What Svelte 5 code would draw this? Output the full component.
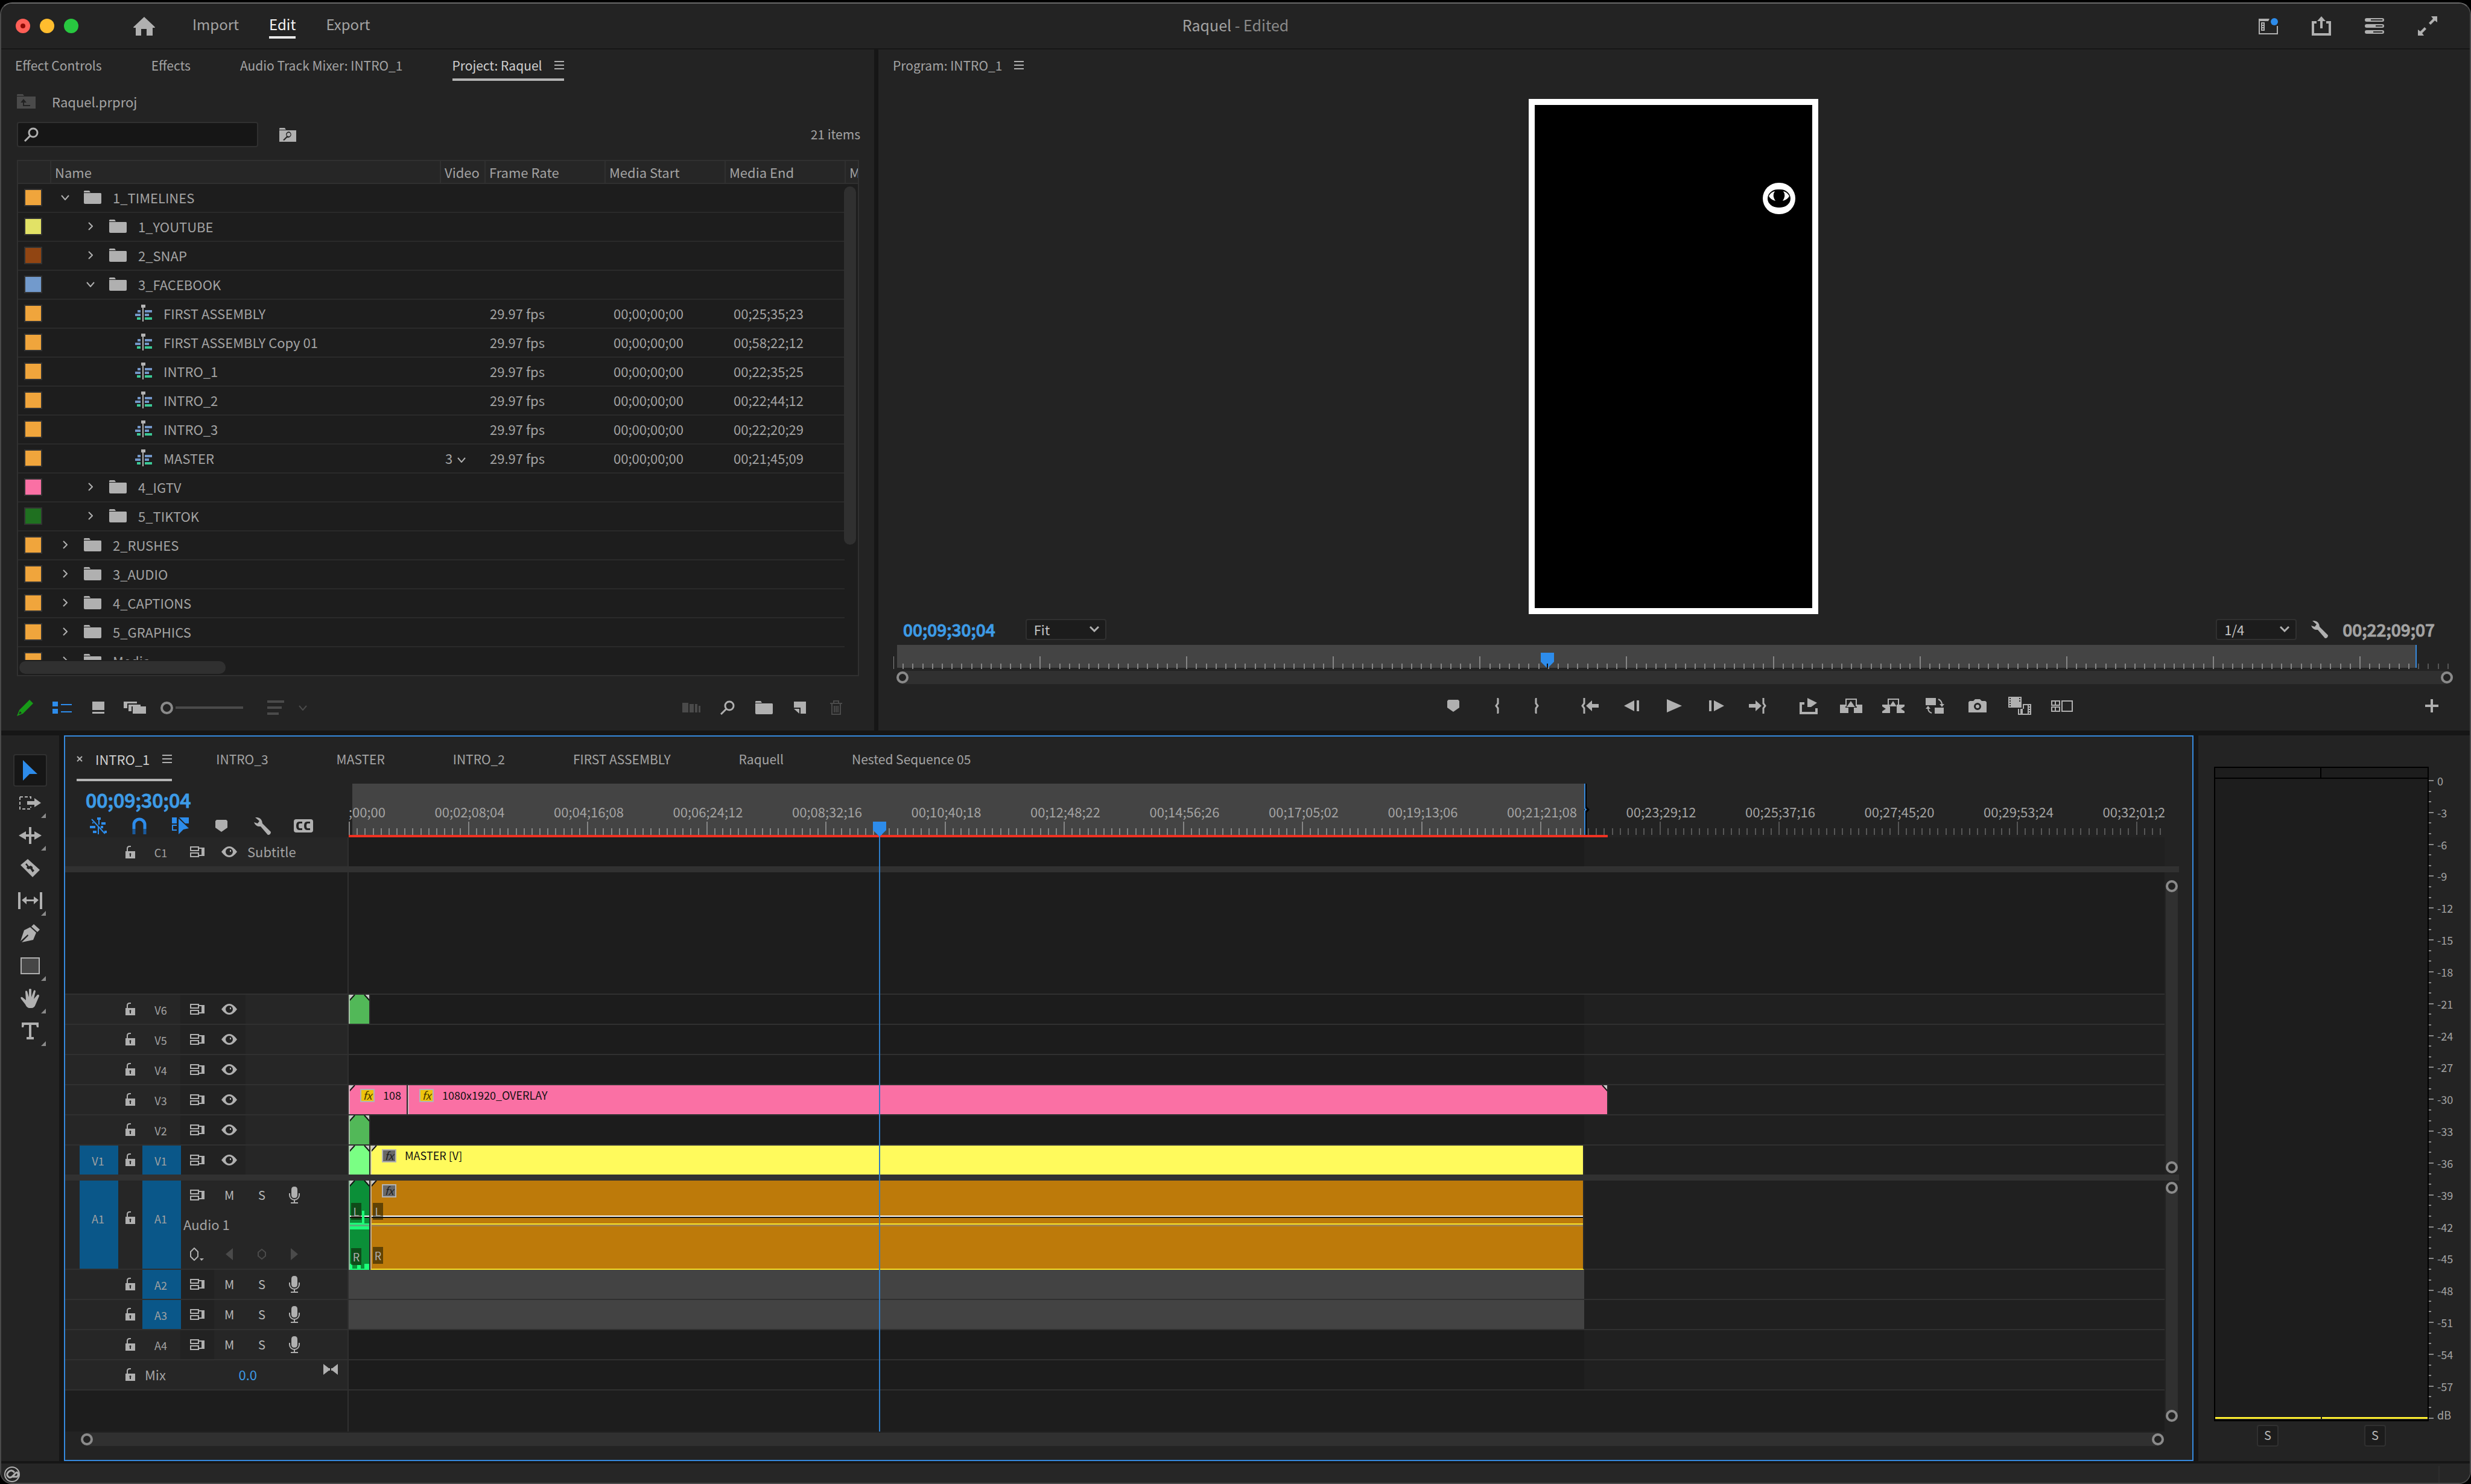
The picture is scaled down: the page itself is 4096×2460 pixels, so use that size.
<script>
  const SPAN = 3010;
  const pct = (v) => `${(v / SPAN) * 100}%`;

  const icons = {
    home: { w: 36, h: 31, d: 'M18 0L36 17Q36 18 35 18H32V31H22V20H13V31H4V18H1Q0 18 0 17z' },
    menu: { w: 16, h: 14, d: 'M0 0H16V2H0zM0 6H16V8H0zM0 12H16V14H0z' },
    workspace: {
      w: 32, h: 28,
      d: 'M0 2H18L16 6H2V26H30V14H32V28H0zM4 8H10V22H4zM6 10V12H8V10zM6 14V16H8V14zM6 18V20H8V18z',
      dot: [26, 7, 6]
    },
    share: { w: 32, h: 32, d: 'M0 8H8V12H4V28H28V12H24V8H32V32H0zM16 0L23 8H18V20H14V8H9z' },
    stack: {
      w: 32, h: 26,
      d: 'M3 0H29Q32 0 32 3T29 6H3Q0 6 0 3T3 0zM10 2V4H29Q30 3 29 2zM3 10H29Q32 10 32 13T29 16H3Q0 16 0 13T3 10zM18 12V14H29Q30 13 29 12zM3 20H29Q32 20 32 23T29 26H3Q0 26 0 23T3 20zM14 22V24H29Q30 23 29 22z'
    },
    expand: { w: 32, h: 32, d: 'M22 0H32V10L28 7 21 14 18 11 25 4zM0 22L4 25 11 18 14 21 7 28 10 32H0z' },
    folder: { w: 29, h: 22, d: 'M1 0H9L11 3H0V1zM0 4H28L29 5V20Q29 22 27 22H2Q0 22 0 20z' },
    folderUp: { w: 31, h: 24, d: 'M1 0H10L12 3H0V1zM0 4H31V24H0zM11 8L6 14H10V20H22V18H12V14H16z' },
    folderFind: { w: 28, h: 23, d: 'M1 0H9L11 3H0V1zM0 4H28V23H0zM16 6A5 5 0 0 0 12 14L6 20 8 21 13 16A5 5 0 1 0 16 6zM16 8A3 3 0 1 1 15 14A3 3 0 1 1 16 8z' },
    search: { w: 24, h: 24, s: 'M15 2A7 7 0 1 1 15 16A7 7 0 1 1 15 2zM10 14L1 23', sw: 3 },
    right: { w: 8, h: 14, s: 'M1 1L7 7 1 13', sw: 2 },
    down: { w: 14, h: 9, s: 'M1 1L7 8 13 1', sw: 2 },
    downBig: { w: 16, h: 10, s: 'M1 1L8 8 15 1', sw: 3 },
    pencil: { w: 27, h: 27, d: 'M21 0L27 6 10 23 0 27 4 17zM5 19L3 24 8 22z' },
    list: { w: 32, h: 20, d: 'M0 0H9V8H0zM14 4H32V6H14zM0 12H9V20H0zM14 16H32V18H14z' },
    thumb: { w: 20, h: 20, d: 'M0 0H20V14H0zM0 17H20V20H0z' },
    free: { w: 37, h: 20, d: 'M0 0H22V3H6V11H0zM8 5H28V8H13V16H8zM15 8H37V20H15z' },
    sort: { w: 28, h: 24, d: 'M0 0H28V4H0zM0 10H24V14H0zM0 20H19V24H0z' },
    library: { w: 30, h: 16, d: 'M0 0H10V16H0zM12 2H19V16H12zM21 2H25V16H21zM27 5H30V16H27z' },
    newItem: { w: 20, h: 20, d: 'M0 0H20V20H11V10H0zM0 12H9V20z' },
    trash: { w: 22, h: 24, s: 'M1 5H21M7 4V1H15V4M4 6V23H18V6M8 9V20M11 9V20M14 9V20', sw: 2 },
    marker: { w: 20, h: 20, d: 'M2 0H18L20 2V13L10 20 0 13V2z' },
    braceL: { w: 8, h: 26, s: 'M7 1H6V9L3 13 6 17V25H7', sw: 3 },
    braceR: { w: 8, h: 26, s: 'M1 1H2V9L5 13 2 17V25H1', sw: 3 },
    goIn: { w: 30, h: 26, s: 'M6 0V9L3 13 6 17V26', sw: 3, d: 'M9 13L19 4V10H30V16H19V22z' },
    goOut: { w: 30, h: 26, s: 'M24 0V9L27 13 24 17V26', sw: 3, d: 'M21 13L11 4V10H0V16H11V22z' },
    stepBack: { w: 26, h: 18, d: 'M0 9L17 0V18zM21 0H25V18H21z' },
    play: { w: 26, h: 22, d: 'M1 0L26 11 1 22z' },
    stepForward: { w: 26, h: 18, d: 'M1 0H5V18H1zM9 0L26 9 9 18z' },
    insert: { w: 30, h: 27, s: 'M8 9H2V25H28V17', sw: 4, d: 'M13 0L29 8 19 15H13z' },
    lift: { w: 37, h: 24, s: 'M10 13V1H27V13', sw: 2, d: 'M0 10H9V15H14V24H0zM37 10H28V15H23V24H37zM18 4L25 14H11z' },
    extract: { w: 37, h: 24, s: 'M10 11V1H27V11', sw: 2, d: 'M0 10H13V24H0V21L6 17 0 13zM37 10H24V24H37V21L31 17 37 13zM18 4L24 13H12z' },
    compare: { w: 34, h: 26, s: 'M22 2Q28 5 28 11M11 25Q5 23 5 17', sw: 2, d: 'M1 0H18V12H1zM16 16H31V26H16zM24 10H32L28 15zM1 18H9L5 13z' },
    camera: { w: 30, h: 22, d: 'M8 3L11 0H19L22 3H28L30 5V22H0V5L2 3zM15 6A6 6 0 1 0 15 18A6 6 0 1 0 15 6zM15 9A3 3 0 1 1 15 15A3 3 0 1 1 15 9z' },
    film: { w: 38, h: 30, d: 'M0 0H22V18H0zM2 2V4H4V2zM2 6V8H4V6zM2 10V12H4V10zM2 14V16H4V14zM18 2V4H20V2zM18 6V8H20V6zM24 12H38V30H16V20H18V28H20V20H24zM24 20V28H32V14H26V20zM34 14V16H36V14zM34 18V20H36V18zM34 22V24H36V22zM34 26V28H36V26z' },
    multi: { w: 36, h: 19, s: 'M1 1H14V8H1zM7 1V8M1 11H14V18H1zM7 11V18M18 1H35V18H18z', sw: 2 },
    plus: { w: 22, h: 22, d: 'M9 0H13V9H22V13H13V22H9V13H0V9H9z' },
    wrench: { w: 28, h: 29, d: 'M2 0Q13 -1 14 10L28 24Q28 29 23 29L11 15Q3 16 0 8L6 10 9 6z' },
    nest: { w: 28, h: 28, s: 'M3 3L25 27', sw: 2, d: 'M12 0H18V4H16V12H14V4H12zM19 8H26V12H19zM0 14H9V18H0zM13 15V28H15V16zM18 14H22V18H18zM5 22H11V26H5zM24 22H28V26H24zM4 8H6V10H4z' },
    magnet: { w: 24, h: 28, s: 'M3 19V12A9 9 0 0 1 21 12V19', sw: 5, s2: 'M3 19V28M21 19V28' },
    linked: { w: 28, h: 28, d: 'M0 0H8V10H0zM12 0H28V10H22L13 1zM0 12H8V14H2V20H8V22H0zM11 2L28 18 19 20 11 28z' },
    cc: { w: 32, h: 22, d: 'M4 0H28Q32 0 32 4V18Q32 22 28 22H4Q0 22 0 18V4Q0 0 4 0zM14 7V4H9Q4 4 4 11T9 18H14V15H10Q8 15 8 11T10 7zM27 7V4H22Q17 4 17 11T22 18H27V15H23Q21 15 21 11T23 7z' },
    lock: { w: 16, h: 21, s: 'M3 10V5Q3 1 7 1H9', sw: 2, d: 'M0 9H16V21H0zM8 12A2 2 0 0 0 7 15V18H9V15A2 2 0 0 0 8 12z' },
    sync: { w: 24, h: 18, s: 'M1 1H14V7H1zM1 11H14V17H1zM14 3H21V15H14', sw: 2, d: 'M19 2H24V16H19z' },
    eye: { w: 26, h: 18, d: 'M0 9Q13 -9 26 9Q13 27 0 9zM13 3A6 6 0 1 0 13 15A6 6 0 1 0 13 3zM14 6H16V9H14z' },
    mic: { w: 18, h: 28, s: 'M1 11V14A8 8 0 0 0 17 14V11M9 22V27M3 27H15', sw: 2, d: 'M9 0Q14 0 14 5V14Q14 19 9 19T4 14V5Q4 0 9 0z' },
    keyframe: { w: 24, h: 22, s: 'M7 1L13 7V15L7 21 1 15V7z', sw: 2, d: 'M16 18H23L19 22z' },
    diamond: { w: 14, h: 18, s: 'M7 1L13 6V12L7 17 1 12V6z', sw: 2 },
    prev: { w: 12, h: 20, d: 'M0 10L12 0V20z' },
    next: { w: 12, h: 20, d: 'M0 0L12 10 0 20z' },
    bowtie: { w: 24, h: 18, d: 'M0 0L9 7H11V11H9L0 18zM24 0L15 7H13V11H15L24 18z' },
    close: { w: 10, h: 10, s: 'M1 1L9 9M9 1L1 9', sw: 2 },
    select: { w: 24, h: 34, d: 'M0 0L24 23H11L0 34z' },
    trackSelect: { w: 36, h: 22, s: 'M1 1H19V5M1 1V21H19V17', sw: 2, dash: '5 3', d: 'M13 8H25V3L36 11 25 18V14H13z' },
    ripple: { w: 38, h: 28, d: 'M0 14L12 7V12H17V0H21V12H26V7L38 14 26 21V16H21V28H17V16H12V21z' },
    razor: { w: 32, h: 30, d: 'M12 0L32 18 20 30 0 10zM10 7L8 9 11 12 10 15 13 17 16 16 20 22 23 19 20 16 20 13 17 11 14 12z' },
    slip: { w: 40, h: 28, d: 'M0 0H4V28H0zM36 0H40V28H36zM6 13L14 7V12H26V7L34 13 26 20V15H14V20z' },
    pen: { w: 32, h: 30, d: 'M22 0L32 9 28 13 18 4zM16 5L26 14 21 26 2 30 13 19 12 17 0 28 6 10z' },
    rect: { w: 32, h: 28, s: 'M1 1H31V27H1z', sw: 2, fill: '#464646' },
    hand: { w: 32, h: 32, d: 'M8 5Q8 2 11 4L14 14 14 1Q16 -1 18 1V14L22 3Q24 1 25 4L22 17 28 10Q31 9 31 12L25 26Q23 32 18 32H14Q10 31 8 26L1 17Q-1 13 3 14L9 19z' },
    type: { w: 28, h: 28, d: 'M0 0H28V8H25L24 4H16V24H20V28H8V24H12V4H4L3 8H0z' }
  };

  const topIcons = ['workspace', 'share', 'stack', 'expand'];
  const ORANGE = '#f0a53c';

  const rows = [
    { color: ORANGE, name: '1_TIMELINES', level: 0, open: true },
    { color: '#e2e266', name: '1_YOUTUBE', level: 1 },
    { color: '#914512', name: '2_SNAP', level: 1 },
    { color: '#729acc', name: '3_FACEBOOK', level: 1, open: true },
    { color: ORANGE, name: 'FIRST ASSEMBLY', level: 2, end: '00;25;35;23' },
    { color: ORANGE, name: 'FIRST ASSEMBLY Copy 01', level: 2, end: '00;58;22;12' },
    { color: ORANGE, name: 'INTRO_1', level: 2, end: '00;22;35;25' },
    { color: ORANGE, name: 'INTRO_2', level: 2, end: '00;22;44;12' },
    { color: ORANGE, name: 'INTRO_3', level: 2, end: '00;22;20;29' },
    { color: ORANGE, name: 'MASTER', level: 2, end: '00;21;45;09', usage: 3 },
    { color: '#fa70a4', name: '4_IGTV', level: 1 },
    { color: '#1f7020', name: '5_TIKTOK', level: 1 },
    { color: ORANGE, name: '2_RUSHES', level: 0 },
    { color: ORANGE, name: '3_AUDIO', level: 0 },
    { color: ORANGE, name: '4_CAPTIONS', level: 0 },
    { color: ORANGE, name: '5_GRAPHICS', level: 0 },
    { color: ORANGE, name: 'Media', level: 0 }
  ];

  const tools = [
    { icon: 'select', label: 'Selection' },
    { icon: 'trackSelect', label: 'Track select', more: true },
    { icon: 'ripple', label: 'Ripple edit', more: true },
    { icon: 'razor', label: 'Razor' },
    { icon: 'slip', label: 'Slip', more: true },
    { icon: 'pen', label: 'Pen' },
    { icon: 'rect', label: 'Rectangle', more: true },
    { icon: 'hand', label: 'Hand', more: true },
    { icon: 'type', label: 'Type', more: true }
  ];

  const sequences = ['INTRO_3', 'MASTER', 'INTRO_2', 'FIRST ASSEMBLY', 'Raquell', 'Nested Sequence 05'];

  const times = [
    '00;00;00;00', '00;02;08;04', '00;04;16;08', '00;06;24;12', '00;08;32;16', '00;10;40;18',
    '00;12;48;22', '00;14;56;26', '00;17;05;02', '00;19;13;06', '00;21;21;08', '00;23;29;12',
    '00;25;37;16', '00;27;45;20', '00;29;53;24', '00;32;01;28'
  ];
  const MAJOR = 197.5;
  const OUT = 2048;
  const ticks = Array.from({ length: 229 }, (_, i) => ({ x: 1 + (i * MAJOR) / 15, major: i % 15 === 0 }));
  const scrubTicks = Array.from({ length: 160 }, (_, i) => ({ x: (i * 16.2) / 25.8, major: i % 15 === 0 }));

  const videoTracks = [
    { name: 'V6', clips: [{ from: 0, to: 36, color: '#52b858', fades: 'lr' }] },
    { name: 'V5', clips: [] },
    { name: 'V4', clips: [] },
    {
      name: 'V3',
      clips: [
        { from: 0, to: 98, color: '#fa70a4', fades: 'l', fx: 'on', text: '108' },
        { from: 98, to: 2088, color: '#fa70a4', fades: 'r', fx: 'on', text: '1080x1920_OVERLAY' }
      ]
    },
    { name: 'V2', clips: [{ from: 0, to: 36, color: '#52b858', fades: 'lr' }] },
    {
      name: 'V1',
      source: true,
      clips: [
        { from: 0, to: 36, color: '#7aff84', fades: 'lr' },
        { from: 36, to: 2048, color: '#fffa5c', fades: 'l', fx: 'off', text: 'MASTER [V]' }
      ]
    }
  ];

  const audioTracks = [
    { name: 'A2', target: true },
    { name: 'A3', target: true },
    { name: 'A4' }
  ];

  // one label every 3 dB
  const levels = Array.from({ length: 61 }, (_, i) => ({
    major: i % 3 === 0,
    text: i === 60 ? 'dB' : i === 0 ? '0' : `-${i}`
  }));

  let search = $state('');
  let zoom = $state(0);
  let fit = $state('Fit');
  let quality = $state('1/4');
</script>

{#snippet icon(name)}
  {@const i = icons[name]}
  <svg class="icon" width={i.w} height={i.h} viewBox="0 0 {i.w} {i.h}" aria-hidden="true">
    {#if i.d}<path d={i.d} fill="currentColor" fill-rule="evenodd" />{/if}
    {#if i.s}
      <path d={i.s} fill={i.fill ?? 'none'} stroke="currentColor" stroke-width={i.sw} stroke-dasharray={i.dash} />
    {/if}
    {#if i.s2}<path d={i.s2} fill="none" stroke="#1a5a9c" stroke-width={i.sw} />{/if}
    {#if i.dot}<circle cx={i.dot[0]} cy={i.dot[1]} r={i.dot[2]} fill="#2d8ceb" />{/if}
  </svg>
{/snippet}

{#snippet button(name, label, extra = '')}
  <button class="tool {extra}" aria-label={label}>{@render icon(name)}</button>
{/snippet}

{#snippet sequenceIcon()}
  <svg class="icon" width="28" height="28" viewBox="0 0 28 28" aria-hidden="true">
    <path d="M10 0H17V5H14V28H12V5H10z" fill="#b4b4b4" />
    <path d="M4 9H9V13H4zM16 9H28V13H16zM0 15H9V19H0zM16 15H23V19H16z" fill="#7396c8" />
    <path d="M3 21H9V25H3zM16 21H28V25H16z" fill="#3cc896" />
  </svg>
{/snippet}

{#snippet clipView(c)}
  <div class="clip" style="left: {pct(c.from)}; width: {pct(c.to - c.from)}; background: {c.color}">
    {#if c.fades.includes('l')}{@render corner('left')}{/if}
    {#if c.fades.includes('r')}{@render corner('right')}{/if}
    {#if c.fx}<span class="fx {c.fx}">fx</span>{/if}
    {#if c.text}<span class="clip-name">{c.text}</span>{/if}
  </div>
{/snippet}

{#snippet corner(side)}
  <svg class="corner {side}" width="11" height="11" viewBox="0 0 11 11" aria-hidden="true">
    <path d={side === 'left' ? 'M0 0H9L0 10z' : 'M11 0H2L11 10z'} fill="#c8c8c8" />
    <path d={side === 'left' ? 'M10 0L0 11' : 'M1 0L11 11'} stroke="#111" stroke-width="2" />
  </svg>
{/snippet}

<div class="window">
  <header class="titlebar">
    <div class="lights"><i class="red"></i><i class="yellow"></i><i class="green"></i></div>
    {@render button('home', 'Home', 'home')}
    <nav class="modes">
      <a href="#import">Import</a>
      <a href="#edit" class="active">Edit</a>
      <a href="#export">Export</a>
    </nav>
    <h1>Raquel <span>- Edited</span></h1>
    <div class="top-icons">
      {#each topIcons as name}{@render button(name, name)}{/each}
    </div>
  </header>

  <main>
    <div class="upper">
      <section class="panel project">
        <div class="tabs">
          <button class="tab">Effect Controls</button>
          <button class="tab">Effects</button>
          <button class="tab">Audio Track Mixer: INTRO_1</button>
          <button class="tab active">Project: Raquel {@render icon('menu')}</button>
        </div>
        <div class="path"><span class="dim">{@render icon('folderUp')}</span>Raquel.prproj</div>
        <div class="finder">
          <label class="search">
            {@render icon('search')}
            <input type="text" aria-label="Search" bind:value={search} />
          </label>
          {@render button('folderFind', 'Find in bin')}
          <span class="count">21 items</span>
        </div>

        <div class="bin">
          <div class="bin-view">
            <table>
              <colgroup>
                <col class="c-label" /><col class="c-name" /><col class="c-video" /><col class="c-time" />
                <col class="c-time" /><col class="c-time" /><col class="c-last" />
              </colgroup>
              <thead>
                <tr>
                  <th aria-label="Label"></th><th>Name</th><th>Video</th><th>Frame Rate</th>
                  <th>Media Start</th><th>Media End</th><th>M</th>
                </tr>
              </thead>
              <tbody>
                {#each rows as row}
                  <tr>
                    <td><i class="swatch" style="background: {row.color}"></i></td>
                    <td>
                      <div class="name level-{row.level}">
                        {#if row.level < 2}
                          <span class="twist">{@render icon(row.open ? 'down' : 'right')}</span>
                          {@render icon('folder')}
                        {:else}
                          {@render sequenceIcon()}
                        {/if}
                        <span>{row.name}</span>
                      </div>
                    </td>
                    <td>{#if row.usage}<span class="usage">{row.usage} {@render icon('down')}</span>{/if}</td>
                    <td>{row.end ? '29.97 fps' : ''}</td>
                    <td class="start">{row.end ? '00;00;00;00' : ''}</td>
                    <td class="start">{row.end ?? ''}</td>
                    <td class="last"></td>
                  </tr>
                {/each}
              </tbody>
            </table>
            <i class="scroll-y"></i>
          </div>
          <i class="scroll-x"></i>
        </div>

        <div class="bin-tools">
          {@render button('pencil', 'Writable', 'pencil')}
          {@render button('list', 'List view', 'blue list')}
          {@render button('thumb', 'Icon view', 'thumb')}
          {@render button('free', 'Freeform view', 'free')}
          <input class="zoom" type="range" aria-label="Zoom" bind:value={zoom} />
          {@render button('sort', 'Sort icons', 'dim')}
          {@render button('down', 'Sort menu', 'dim sort-menu')}
          <div class="bin-actions">
            {@render button('library', 'Automate to sequence', 'dim')}
            {@render button('search', 'Find')}
            {@render button('folder', 'New bin')}
            {@render button('newItem', 'New item')}
            {@render button('trash', 'Clear', 'dim')}
          </div>
        </div>
      </section>

      <section class="panel program">
        <div class="tabs">
          <button class="tab">Program: INTRO_1 {@render icon('menu')}</button>
        </div>
        <div class="stage">
          <div class="frame">
            <svg class="logo" width="54" height="52" viewBox="0 0 54 52" aria-hidden="true">
              <rect width="54" height="52" rx="26" fill="#fff" />
              <rect x="8" y="11" width="38" height="30" rx="17" ry="15" />
              <path d="M20 14Q15 21 21 30Q13 28 10 22Q14 15 20 14zM34 14Q39 21 33 30Q41 28 44 22Q40 15 34 14z" fill="#fff" />
            </svg>
          </div>
        </div>
        <div class="monitor-bar">
          <span class="timecode blue">00;09;30;04</span>
          <label class="picker">
            <select aria-label="Zoom level" bind:value={fit}><option>Fit</option></select>
            {@render icon('downBig')}
          </label>
          <span class="grow"></span>
          <label class="picker">
            <select aria-label="Playback resolution" bind:value={quality}><option>1/4</option></select>
            {@render icon('downBig')}
          </label>
          {@render button('wrench', 'Settings', 'settings')}
          <span class="timecode">00;22;09;07</span>
        </div>
        <div class="scrub">
          <i class="range"></i>
          <svg class="ticks" width="100%" height="40" shape-rendering="crispEdges" aria-hidden="true">
            {#each scrubTicks as t}
              <line x1="{t.x}%" x2="{t.x}%" y1={t.major ? 19 : 31} y2="40" class:out={t.x > 97.8} />
            {/each}
          </svg>
          <svg class="head" width="22" height="25" viewBox="0 0 22 25" aria-hidden="true">
            <path d="M0 0H22V15L12 25H10L0 15z" fill="#2d8ceb" /><path d="M10 18H12V25H10z" fill="#111" />
          </svg>
        </div>
        <div class="bar-x"><i></i><i></i></div>
        <div class="transport">
          <div class="side before">
            {@render button('marker', 'Add marker', 'wide')}
            {@render button('braceL', 'Mark in')}
            {@render button('braceR', 'Mark out', 'apart')}
            {@render button('goIn', 'Go to in')}
            {@render button('stepBack', 'Step back')}
          </div>
          {@render button('play', 'Play')}
          <div class="side">
            {@render button('stepForward', 'Step forward')}
            {@render button('goOut', 'Go to out', 'after')}
            {@render button('insert', 'Export')}
            {@render button('lift', 'Lift')}
            {@render button('extract', 'Extract')}
            {@render button('compare', 'Comparison view')}
            {@render button('camera', 'Export frame')}
            {@render button('film', 'Toggle proxies')}
            {@render button('multi', 'Multi-camera')}
            <span class="grow"></span>
            {@render button('plus', 'Button editor')}
          </div>
        </div>
      </section>
    </div>

    <div class="lower">
      <aside class="panel toolbox">
        {#each tools as t, i}
          <button class="tool-button" class:active={i === 0} aria-label={t.label}>
            {@render icon(t.icon)}
            {#if t.more}<i></i>{/if}
          </button>
        {/each}
      </aside>

      <section class="panel timeline">
        <div class="seq-tabs">
          <button class="seq active">{@render icon('close')}<span>INTRO_1</span>{@render icon('menu')}</button>
          {#each sequences as name}<button class="seq">{name}</button>{/each}
        </div>

        <div class="board">
          <div class="ruler-row">
            <div class="controls">
              <span class="timecode big blue">00;09;30;04</span>
              <div class="toggles">
                {@render button('nest', 'Insert as nest', 'blue')}
                {@render button('magnet', 'Snap', 'blue')}
                {@render button('linked', 'Linked selection', 'blue')}
                {@render button('marker', 'Add marker')}
                {@render button('wrench', 'Timeline settings')}
                {@render button('cc', 'Captions')}
              </div>
            </div>
            <div class="ruler">
              <i class="range" style="width: calc({pct(OUT)} - 6px)"></i>
              {#each times as time, i}
                <span class="time" style="left: {pct(i * MAJOR + 3)}">{time}</span>
              {/each}
              <svg class="ticks" width="100%" height="22" shape-rendering="crispEdges" aria-hidden="true">
                {#each ticks as t}
                  <line x1={pct(t.x)} x2={pct(t.x)} y1={t.major ? 0 : 11} y2="22" class:out={t.x > OUT} />
                {/each}
              </svg>
              <svg class="out-mark" style="left: {pct(OUT)}" width="10" height="86" viewBox="0 0 10 86" aria-hidden="true">
                <path d="M2 0H4V38L9 43 4 48V86H2z" fill="#000" />
                <path d="M1 0V41L3 43 1 45V86" fill="none" stroke="#3689dd" stroke-width="2" />
              </svg>
              <i class="render" style="width: {pct(2087)}"></i>
            </div>
          </div>

          <div class="track caption">
            <div class="head-cell">
              <span></span>
              {@render icon('lock')}
              <span class="patch off">C1</span>
              {@render icon('sync')}
              {@render icon('eye')}
              <span class="label">Subtitle</span>
            </div>
            <div class="lane"><i class="in" style="width: {pct(OUT)}"></i></div>
          </div>
          <div class="divider"></div>

          <div class="area video">
            <div class="tracks">
              <div class="void"></div>
              {#each videoTracks as track}
                <div class="track">
                  <div class="head-cell shaded">
                    {#if track.source}<span class="patch">V1</span>{:else}<span></span>{/if}
                    {@render icon('lock')}
                    <span class="patch" class:off={!track.source}>{track.name}</span>
                    {@render icon('sync')}
                    {@render icon('eye')}
                  </div>
                  <div class="lane">
                    <i class="in" style="width: {pct(OUT)}"></i>
                    {#each track.clips as c}{@render clipView(c)}{/each}
                  </div>
                </div>
              {/each}
            </div>
            <div class="bar-y first"><i></i><i></i></div>
          </div>
          <div class="divider"></div>

          <div class="area audio">
            <div class="tracks">
              <div class="track tall">
                <div class="head-cell">
                  <span class="patch">A1</span>
                  {@render icon('lock')}
                  <span class="patch">A1</span>
                  <div class="audio-head">
                    <div class="audio-row">
                      {@render icon('sync')}<b>M</b><b>S</b>{@render icon('mic')}
                    </div>
                    <span class="label">Audio 1</span>
                    <div class="audio-row">
                      {@render icon('keyframe')}
                      <span class="dim">{@render icon('prev')}</span>
                      <span class="dim">{@render icon('diamond')}</span>
                      <span class="dim">{@render icon('next')}</span>
                    </div>
                  </div>
                </div>
                <div class="lane">
                  <i class="in" style="width: {pct(OUT)}"></i>
                  <div class="clip sound green" style="left: 0; width: {pct(36)}">
                    {@render corner('left')}{@render corner('right')}
                    <svg class="wave" width="34" height="148" viewBox="0 0 34 148" aria-hidden="true">
                      <path d="M20 50H24V72H34V81H0V70H20zM0 138H4V146H12V140H18V146H24V138H32V148H0z" fill="#1cff78" />
                    </svg>
                    <em class="left-channel">L</em><em class="right-channel">R</em>
                  </div>
                  <div class="clip sound orange" style="left: {pct(36)}; width: {pct(2012)}">
                    {@render corner('left')}
                    <span class="fx off">fx</span>
                    <em class="left-channel">L</em><em class="right-channel">R</em>
                  </div>
                </div>
              </div>
              {#each audioTracks as track}
                <div class="track">
                  <div class="head-cell audio-cell">
                    <span></span>
                    {@render icon('lock')}
                    <span class="patch" class:off={!track.target}>{track.name}</span>
                    {@render icon('sync')}<b>M</b><b>S</b>{@render icon('mic')}
                  </div>
                  <div class="lane">
                    <i class="in" class:filled={track.target} style="width: {pct(OUT)}"></i>
                  </div>
                </div>
              {/each}
              <div class="track">
                <div class="head-cell mix">
                  <span></span>
                  {@render icon('lock')}
                  <span class="label">Mix</span>
                  <span class="label blue">0.0</span>
                  {@render icon('bowtie')}
                </div>
                <div class="lane"><i class="in" style="width: {pct(OUT)}"></i></div>
              </div>
              <div class="void end"></div>
            </div>
            <div class="bar-y"><i></i><i></i></div>
          </div>

          <div class="playhead-layer">
            <div class="playhead" style="left: {pct(880)}">
              <svg width="22" height="24" viewBox="0 0 22 24" aria-hidden="true">
                <path d="M0 0H22V14L12 24H10L0 14z" fill="#2d8ceb" />
              </svg>
            </div>
          </div>
        </div>
        <div class="bar-x"><i></i><i></i></div>
      </section>

      <section class="panel meters">
        <div class="meter-main">
          <div class="meter-box">
            <div class="clip-lights"><i></i><i></i></div>
            <div class="floor"><i></i><i></i></div>
          </div>
          <div class="solos"><button>S</button><button>S</button></div>
        </div>
        <div class="scale">
          {#each levels as l}
            <div class="level" class:major={l.major}>{#if l.major}<span>{l.text}</span>{/if}</div>
          {/each}
        </div>
      </section>
    </div>
  </main>

  <footer>
    <svg width="30" height="26" viewBox="0 0 30 26" aria-hidden="true">
      <path d="M13 1A12 12 0 1 1 13 25A12 12 0 1 1 13 1z" fill="none" stroke="#b0b0b0" stroke-width="2" />
      <path d="M17 10Q12 4 7 9T8 18Q12 19 16 14T22 10Q25 14 21 17H14" fill="none" stroke="#b0b0b0" stroke-width="3" />
    </svg>
    <i></i>
  </footer>
</div>

<style>
  :global(body) {
    background: #0a0206;
  }

  :global(#app) {
    box-sizing: border-box;
    height: 100vh;
    padding-top: 4px;
    overflow: hidden;
    background: linear-gradient(90deg, #2a0818, #1a0410);
  }

  .window {
    --line: #303030;
    --grey: #b0b0b0;
    --blue: #3d9be6;
    display: flex;
    flex-direction: column;
    height: 100%;
    overflow: hidden;
    border: 2px solid #4a4a4a;
    border-top-color: #6a6a6a;
    border-radius: 20px;
    background: #161616;
    color: #a3a3a3;
    font-family: 'Noto Sans CJK SC', 'Noto Sans', sans-serif;
    font-size: 22px;
    line-height: 28px;
    box-shadow: 0 0 0 20px #000;
  }

  .window *,
  .window {
    box-sizing: border-box;
  }

  button {
    display: flex;
    align-items: center;
    justify-content: center;
    padding: 0;
    border: none;
    background: none;
    color: inherit;
    font: inherit;
  }

  i,
  em {
    font-style: normal;
  }

  .icon {
    display: block;
    flex: none;
    color: var(--grey);
  }

  .dim .icon {
    color: #4a4a4a;
  }

  .blue .icon {
    color: #2d8ceb;
  }

  .pencil .icon {
    color: #179a17;
  }

  .blue {
    color: var(--blue);
  }

  .grow {
    flex: 1;
  }

  /* title bar */
  .titlebar {
    position: relative;
    display: flex;
    align-items: center;
    flex: none;
    height: 74px;
    padding: 0 54px 0 24px;
    background: #232323;
  }

  .lights {
    display: flex;
    gap: 16px;
    width: 195px;
  }

  .lights i {
    width: 24px;
    height: 24px;
    border-radius: 50%;
    background: #ff5f57;
  }

  .lights .red {
    border: 8px solid #ff5f57;
    background: #8f0a04;
  }

  .lights .yellow {
    background: #ffbd2e;
  }

  .lights .green {
    background: #28c840;
  }

  .modes {
    display: flex;
    gap: 50px;
    margin-left: 62px;
    font-size: 24px;
  }

  .modes a {
    padding: 4px 0 6px;
    border-bottom: 4px solid transparent;
    color: inherit;
    text-decoration: none;
  }

  .modes .active {
    border-color: #e8e8e8;
    color: #f4f4f4;
  }

  h1 {
    position: absolute;
    inset: 0;
    margin: 0;
    font-size: 25px;
    font-weight: 400;
    line-height: 70px;
    text-align: center;
    pointer-events: none;
  }

  h1 span {
    color: #8a8a8a;
  }

  .top-icons {
    display: flex;
    gap: 56px;
    margin-left: auto;
  }

  main {
    display: flex;
    flex: 1;
    flex-direction: column;
    gap: 8px;
    min-height: 0;
    padding: 2px 0 4px;
  }

  .upper {
    display: grid;
    flex: 1129;
    grid-template-columns: 1447fr 2638fr;
    gap: 7px;
    min-height: 0;
  }

  .lower {
    display: grid;
    flex: 1203;
    grid-template-columns: 96px minmax(0, 1fr) 450px;
    gap: 8px;
    min-height: 0;
  }

  .panel {
    display: flex;
    flex-direction: column;
    min-width: 0;
    min-height: 0;
    background: #232323;
  }

  /* project */
  .project {
    padding: 0 25px 0 26px;
  }

  .tabs {
    display: flex;
    flex: none;
    gap: 82px;
    height: 52px;
    padding-top: 12px;
    margin-left: -3px;
    font-size: 21px;
  }

  .tab {
    gap: 20px;
    border-bottom: 4px solid transparent;
    padding-bottom: 8px;
    white-space: nowrap;
  }

  .tab.active {
    border-color: #b4b4b4;
    color: #cfcfcf;
  }

  .path {
    display: flex;
    align-items: center;
    gap: 27px;
    height: 68px;
  }

  .finder {
    display: flex;
    align-items: center;
    gap: 35px;
    height: 42px;
  }

  .search {
    display: flex;
    align-items: center;
    width: 400px;
    height: 42px;
    padding: 0 10px;
    border: 2px solid var(--line);
    border-radius: 4px;
    background: #161616;
  }

  .search input {
    flex: 1;
    min-width: 0;
    border: none;
    background: none;
    color: inherit;
    font: inherit;
    outline: none;
  }

  .count {
    margin-left: auto;
    margin-right: -2px;
    padding-bottom: 2px;
    font-size: 21px;
  }

  .bin {
    display: flex;
    flex: 1;
    flex-direction: column;
    min-height: 0;
    margin-top: 21px;
    border: 2px solid var(--line);
    background: #1d1d1d;
  }

  .bin-view {
    position: relative;
    flex: 1;
    min-height: 0;
    overflow: hidden;
  }

  table {
    width: 100%;
    border-collapse: separate;
    border-spacing: 0;
    table-layout: fixed;
  }

  .c-label {
    width: 53px;
  }

  .c-video {
    width: 74px;
  }

  .c-time {
    width: 199px;
  }

  .c-last {
    width: 22px;
  }

  th {
    height: 38px;
    padding: 0 0 0 6px;
    border-bottom: 2px solid var(--line);
    border-left: 2px solid var(--line);
    background: #262626;
    font-weight: 400;
    text-align: left;
    white-space: nowrap;
    overflow: hidden;
  }

  th:first-child {
    border-left: none;
  }

  td {
    height: 48px;
    padding: 0 0 2px 9px;
    border-bottom: 2px solid #2a2a2a;
    white-space: nowrap;
  }

  td:first-child {
    padding-left: 10px;
  }

  td.start {
    padding-left: 15px;
  }

  td.last {
    border: none;
  }

  .swatch {
    display: block;
    width: 30px;
    height: 29px;
    border: 2px solid #333;
    background-clip: padding-box;
  }

  .name {
    display: flex;
    align-items: center;
    gap: 19px;
    padding-left: 6px;
  }

  .twist {
    display: flex;
    justify-content: center;
    width: 20px;
    margin-right: 2px;
  }

  .name.level-1 {
    padding-left: 48px;
  }

  .name.level-2 {
    padding-left: 132px;
  }

  .usage {
    display: flex;
    align-items: center;
    gap: 8px;
  }

  .usage .icon {
    margin-top: 6px;
  }

  .scroll-y {
    position: absolute;
    top: 42px;
    right: 3px;
    width: 20px;
    height: 594px;
    border-radius: 10px;
    background: var(--line);
  }

  .scroll-x {
    flex: none;
    width: 342px;
    height: 21px;
    margin: 2px;
    border-radius: 10px;
    background: var(--line);
  }

  .bin-tools {
    display: flex;
    align-items: center;
    flex: none;
    height: 90px;
    padding-top: 14px;
  }

  .list {
    margin-left: 32px;
  }

  .thumb {
    margin-left: 34px;
  }

  .free {
    margin-left: 32px;
  }

  .zoom {
    width: 137px;
    height: 20px;
    margin: 0 40px 0 24px;
    appearance: none;
    background: linear-gradient(#4a4a4a, #4a4a4a) right center / 112px 4px no-repeat;
  }

  .zoom::-webkit-slider-thumb {
    width: 21px;
    height: 21px;
    appearance: none;
    border: 4px solid #8a8a8a;
    border-radius: 50%;
    background: #232323;
  }

  .sort-menu {
    margin-left: 24px;
  }

  .bin-actions {
    display: flex;
    align-items: center;
    margin-left: auto;
    margin-right: 8px;
  }

  .bin-actions .tool {
    width: 60px;
  }

  /* program */
  .program {
    padding: 0 28px;
  }

  .program .tabs {
    margin-left: -4px;
  }

  .stage {
    display: flex;
    align-items: center;
    justify-content: center;
    flex: 1;
    min-height: 0;
    padding: 30px 2px 2px 0;
  }

  .frame {
    position: relative;
    height: 100%;
    aspect-ratio: 480 / 854;
    border: 10px solid #fff;
    background: #000;
  }

  .logo {
    position: absolute;
    top: 15.5%;
    right: 6%;
  }

  .monitor-bar {
    display: flex;
    align-items: center;
    flex: none;
    gap: 24px;
    height: 46px;
    padding: 0 30px 0 13px;
  }

  .timecode {
    font-size: 28px;
    font-weight: 500;
    white-space: nowrap;
    -webkit-text-stroke: 1px currentColor;
  }

  .timecode.big {
    font-size: 32px;
  }

  .monitor-bar .timecode.blue {
    margin-right: 26px;
  }

  .picker {
    display: flex;
    align-items: center;
    position: relative;
    width: 134px;
    height: 35px;
  }

  .picker select {
    width: 100%;
    height: 100%;
    padding: 0 0 0 12px;
    appearance: none;
    border: 2px solid var(--line);
    border-radius: 4px;
    background: #1c1c1c;
    color: #c4c4c4;
    font: inherit;
  }

  .picker .icon {
    position: absolute;
    right: 12px;
    pointer-events: none;
  }

  .scrub {
    position: relative;
    flex: none;
    height: 46px;
    margin: 0 4px 0 -3px;
  }

  .range {
    position: absolute;
    top: 3px;
    left: 6px;
    height: 38px;
    background: #444;
  }

  .scrub .range {
    right: 56px;
    border-right: 2px solid #3689dd;
  }

  .scrub .ticks {
    position: absolute;
    top: 3px;
    left: 0;
  }

  .ticks line {
    stroke: #858585;
    stroke-width: 2;
  }

  .ticks line.out {
    stroke: #565656;
  }

  .head {
    position: absolute;
    top: 16px;
    left: 42%;
    margin-left: -11px;
  }

  .bar-x {
    display: flex;
    align-items: center;
    justify-content: space-between;
    flex: none;
    height: 22px;
    border-radius: 11px;
    background: var(--line);
  }

  .program .bar-x {
    margin-left: 2px;
  }

  .bar-x i,
  .bar-y i {
    width: 20px;
    height: 20px;
    border: 4px solid #8a8a8a;
    border-radius: 50%;
    background: #222;
  }

  .transport {
    display: grid;
    align-items: center;
    flex: none;
    grid-template-columns: 1fr 70px 1fr;
    height: 72px;
    margin-bottom: 5px;
  }

  .side {
    display: flex;
  }

  .side.before {
    justify-content: flex-end;
  }

  .side .tool {
    width: 70px;
    height: 40px;
  }

  .side .wide {
    width: 74px;
  }

  .side .apart {
    width: 64px;
    margin-right: 20px;
  }

  .side .after {
    width: 68px;
    margin-right: 15px;
  }

  /* tools */
  .toolbox {
    align-items: center;
    padding-top: 31px;
  }

  .tool-button {
    position: relative;
    flex: none;
    width: 56px;
    height: 54px;
    border: 2px solid transparent;
    border-radius: 4px;
  }

  .tool-button.active {
    border-color: var(--line);
    background: #161616;
  }

  .tool-button.active .icon {
    color: #2d8ceb;
  }

  .tool-button i {
    position: absolute;
    right: 0;
    bottom: 0;
    border: 4px solid;
    border-color: transparent #8a8a8a #8a8a8a transparent;
  }

  /* timeline */
  .timeline {
    border: 2px solid #3689dd;
  }

  .seq-tabs {
    display: flex;
    flex: none;
    height: 74px;
    padding: 4px 0 0 19px;
    margin-bottom: 4px;
    gap: 113px;
    font-size: 21px;
  }

  .seq {
    white-space: nowrap;
    border-bottom: 4px solid transparent;
  }

  .seq.active {
    gap: 21px;
    margin-right: -40px;
    border-color: #b4b4b4;
    color: #cfcfcf;
    font-size: 22px;
  }

  .board {
    position: relative;
    display: flex;
    flex: 1;
    flex-direction: column;
    min-height: 0;
  }

  .ruler-row {
    display: flex;
    flex: none;
    height: 89px;
    padding-right: 46px;
  }

  .controls {
    flex: none;
    width: 470px;
    padding: 12px 0 0 21px;
  }

  .controls .timecode {
    display: block;
    margin-left: 13px;
  }

  .toggles {
    display: flex;
    padding-top: 14px;
  }

  .toggles .tool {
    width: 68px;
    height: 32px;
  }

  .ruler {
    position: relative;
    flex: 1;
    min-width: 0;
    overflow: hidden;
  }

  .ruler .range {
    top: 0;
    height: 86px;
  }

  .time {
    position: absolute;
    top: 32px;
    transform: translateX(-50%);
    white-space: nowrap;
  }

  .ruler .ticks {
    position: absolute;
    top: 63px;
    left: 0;
  }

  .out-mark {
    position: absolute;
    top: 0;
  }

  .render {
    position: absolute;
    left: 0;
    bottom: 0;
    height: 4px;
    background: #f03222;
  }

  .track {
    display: flex;
    flex: none;
    height: 50px;
    border-top: 2px solid var(--line);
  }

  .track.caption {
    height: 48px;
    padding-right: 46px;
    border-top: none;
  }

  .head-cell {
    display: grid;
    flex: none;
    grid-template-columns: 64px 40px 64px 54px 52px 1fr;
    align-items: center;
    justify-items: center;
    width: 470px;
    padding-left: 24px;
    border-right: 2px solid var(--line);
    background: #262626;
  }

  .head-cell.shaded {
    background: linear-gradient(90deg, #262626 191px, #222 191px, #222 299px, #262626 299px);
  }

  .head-cell.audio-cell {
    grid-template-columns: 64px 40px 64px 54px 52px 56px 52px;
    background: linear-gradient(90deg, #262626 191px, #222 191px, #222 247px, #262626 247px);
  }

  .head-cell.mix {
    grid-template-columns: 64px 40px 64px 126px 1fr;
  }

  .mix .icon:last-child {
    justify-self: end;
    margin-right: 16px;
    margin-bottom: 18px;
  }

  .mix .label.blue {
    justify-self: end;
  }

  .patch {
    display: flex;
    align-items: center;
    justify-content: center;
    align-self: stretch;
    width: 64px;
    padding: 2px 3px 0 0;
    background: #0a5789;
    font-size: 18px;
  }

  .patch.off {
    background: none;
  }

  .label {
    justify-self: start;
    padding-bottom: 2px;
    padding-left: 4px;
  }

  b {
    color: #b8b8b8;
    font-size: 20px;
    font-weight: 400;
    text-align: center;
  }

  .lane {
    position: relative;
    flex: 1;
    min-width: 0;
    background: #202020;
  }

  .lane .in {
    position: absolute;
    inset: 0 auto 0 0;
    background: #1c1c1c;
  }

  .lane .in.filled {
    background: #434343;
  }

  .divider {
    flex: none;
    height: 10px;
    margin-right: 22px;
    background: #313131;
  }

  .area {
    display: flex;
    min-height: 0;
  }

  .video {
    flex: 500;
  }

  .audio {
    flex: 416;
  }

  .tracks {
    display: flex;
    flex: 1;
    flex-direction: column;
    min-width: 0;
    background: #1d1d1d;
  }

  .void {
    flex: 1;
    width: 470px;
    border-right: 2px solid var(--line);
  }

  .void.end {
    width: auto;
    border-top: 2px solid var(--line);
    border-right: none;
    background: linear-gradient(90deg, transparent 468px, var(--line) 468px, var(--line) 470px, transparent 470px);
  }

  .bar-y {
    display: flex;
    flex: none;
    flex-direction: column;
    justify-content: space-between;
    width: 20px;
    margin: 2px 24px 16px 2px;
    border-radius: 10px;
    background: var(--line);
  }

  .bar-y.first {
    margin-top: 13px;
    margin-bottom: 2px;
  }

  .clip {
    position: absolute;
    top: 0;
    bottom: 0;
    display: flex;
    padding: 6px 0 0 17px;
    border-right: 2px solid #2a2a2a;
    border-left: 2px solid rgba(200, 200, 200, 0.7);
    color: #111;
    overflow: hidden;
  }

  .corner {
    position: absolute;
    top: 0;
  }

  .corner.left {
    left: -2px;
  }

  .corner.right {
    right: -2px;
  }

  .fx {
    flex: none;
    width: 24px;
    height: 22px;
    border: 2px solid #b4b4b4;
    background: #edc40c;
    color: #4a3a00;
    font-size: 18px;
    font-style: italic;
    line-height: 16px;
    text-align: center;
  }

  .fx.off {
    background: #686868;
    color: #222;
  }

  .clip-name {
    margin-left: 14px;
    font-size: 18px;
    line-height: 20px;
    white-space: nowrap;
  }

  .track.tall {
    height: 146px;
    border-top: none;
  }

  .tall .patch {
    padding-bottom: 22px;
  }

  .tall .head-cell {
    grid-template-columns: 64px 40px 64px 1fr;
  }

  .tall .head-cell > .icon {
    margin-bottom: 22px;
  }

  .audio-head {
    display: flex;
    align-self: stretch;
    flex-direction: column;
    justify-content: space-between;
    width: 100%;
  }

  .audio-head .label {
    align-self: flex-start;
  }

  .audio-row {
    display: grid;
    grid-template-columns: 54px 52px 56px 52px;
    align-items: center;
    justify-items: center;
    height: 48px;
  }

  .sound {
    bottom: -2px;
  }

  .sound::before {
    position: absolute;
    top: 58px;
    right: 0;
    left: 0;
    height: 4px;
    background: linear-gradient(#fff 2px, #111 2px);
    content: '';
  }

  .sound::after {
    position: absolute;
    top: 71px;
    right: 0;
    left: 0;
    height: 5px;
    background: linear-gradient(#f6e22a 2px, #a2814a 2px);
    content: '';
  }

  .sound.green {
    background: #0b8f38;
  }

  .sound.green::after {
    background: linear-gradient(#1cff78 2px, #5ab07a 2px);
  }

  .sound.orange {
    border-bottom: 2px solid #f6e22a;
    background: #bd7a0a;
  }

  .wave {
    position: absolute;
    left: 0;
    bottom: 0;
  }

  em {
    position: absolute;
    left: 2px;
    width: 17px;
    height: 28px;
    background: rgba(20, 20, 0, 0.55);
    color: #b0b0b0;
    font-size: 18px;
    line-height: 28px;
    text-align: center;
  }

  .left-channel {
    top: 37px;
  }

  .right-channel {
    bottom: 8px;
  }

  .playhead-layer {
    position: absolute;
    inset: 63px 46px 0 470px;
    pointer-events: none;
  }

  .playhead {
    position: absolute;
    top: 0;
    bottom: 0;
    display: flex;
    justify-content: center;
    width: 2px;
    margin-left: -1px;
    background: #2d7cc8;
  }

  .playhead svg {
    flex: none;
  }

  .timeline > .bar-x {
    margin: 2px 47px 23px 26px;
  }

  /* meters */
  .meters {
    flex-direction: row;
    padding: 52px 0 0 26px;
  }

  .meter-main {
    display: flex;
    flex-direction: column;
    width: 356px;
  }

  .meter-box {
    display: flex;
    flex: 1;
    flex-direction: column;
    justify-content: space-between;
    border: 2px solid #000;
    background: #1d1d1d;
  }

  .clip-lights {
    display: grid;
    grid-template-columns: 1fr 1fr;
    height: 18px;
    border-bottom: 2px solid #000;
  }

  .clip-lights i:first-child {
    border-right: 2px solid #000;
  }

  .floor {
    display: grid;
    grid-template-columns: 1fr 1fr;
    gap: 2px;
    margin-bottom: 2px;
  }

  .floor i {
    height: 3px;
    background: #fff030;
  }

  .solos {
    display: grid;
    grid-template-columns: 1fr 1fr;
    justify-items: center;
    height: 66px;
    padding-top: 6px;
  }

  .solos button {
    width: 36px;
    height: 36px;
    padding-bottom: 2px;
    border: 2px solid var(--line);
    border-radius: 4px;
    background: #1c1c1c;
    color: #b8b8b8;
    font-size: 20px;
  }

  .scale {
    display: flex;
    flex-direction: column;
    justify-content: space-between;
    padding: 22px 0 70px;
  }

  .level {
    display: flex;
    align-items: center;
    height: 2px;
  }

  .level::before {
    width: 4px;
    height: 2px;
    background: #8a8a8a;
    content: '';
  }

  .level.major::before {
    width: 8px;
  }

  .level span {
    padding-left: 6px;
    font-size: 18px;
  }

  .level:last-child span {
    padding-bottom: 12px;
  }

  footer {
    display: flex;
    align-items: center;
    justify-content: space-between;
    flex: none;
    height: 32px;
    padding: 4px 50px 0 5px;
    background: #262626;
  }

  footer i {
    align-self: stretch;
    width: 2px;
    background: #2e2e2e;
  }
</style>
